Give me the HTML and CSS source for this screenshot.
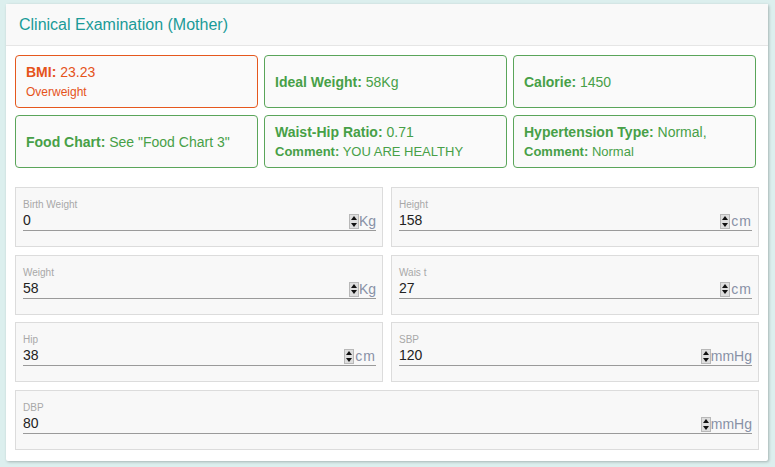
FILE: index.html
```html
<!DOCTYPE html>
<html>
<head>
<meta charset="utf-8">
<link rel="stylesheet" href="styles.css">
</head>
<body>
<div class="card">
  <div class="card-header">Clinical Examination (Mother)</div>
  <div class="card-body">
    <div class="info-grid">
      <div class="info warn">
        <div class="line"><b>BMI:</b> 23.23</div>
        <div class="line small12">Overweight</div>
      </div>
      <div class="info ok">
        <div class="line"><b>Ideal Weight:</b> 58Kg</div>
      </div>
      <div class="info ok">
        <div class="line"><b>Calorie:</b> 1450</div>
      </div>
      <div class="info ok">
        <div class="line"><b>Food Chart:</b> See "Food Chart 3"</div>
      </div>
      <div class="info ok">
        <div class="line"><b>Waist-Hip Ratio:</b> 0.71</div>
        <div class="line small13"><b>Comment:</b> YOU ARE HEALTHY</div>
      </div>
      <div class="info ok">
        <div class="line"><b>Hypertension Type:</b> Normal,</div>
        <div class="line small13"><b>Comment:</b> Normal</div>
      </div>
    </div>

    <div class="field-grid">
      <div class="field">
        <div class="label">Birth Weight</div>
        <div class="input-row"><span class="value">0</span><span class="spin"><i class="up"></i><i class="down"></i></span><span class="unit">Kg</span></div>
      </div>
      <div class="field">
        <div class="label">Height</div>
        <div class="input-row"><span class="value">158</span><span class="spin"><i class="up"></i><i class="down"></i></span><span class="unit cm">cm</span></div>
      </div>
      <div class="field">
        <div class="label">Weight</div>
        <div class="input-row"><span class="value">58</span><span class="spin"><i class="up"></i><i class="down"></i></span><span class="unit">Kg</span></div>
      </div>
      <div class="field">
        <div class="label">Wais t</div>
        <div class="input-row"><span class="value">27</span><span class="spin"><i class="up"></i><i class="down"></i></span><span class="unit cm">cm</span></div>
      </div>
      <div class="field">
        <div class="label">Hip</div>
        <div class="input-row"><span class="value">38</span><span class="spin"><i class="up"></i><i class="down"></i></span><span class="unit cm">cm</span></div>
      </div>
      <div class="field">
        <div class="label">SBP</div>
        <div class="input-row"><span class="value">120</span><span class="spin"><i class="up"></i><i class="down"></i></span><span class="unit">mmHg</span></div>
      </div>
      <div class="field wide">
        <div class="label">DBP</div>
        <div class="input-row"><span class="value">80</span><span class="spin"><i class="up"></i><i class="down"></i></span><span class="unit">mmHg</span></div>
      </div>
    </div>
  </div>
</div>
</body>
</html>
```

FILE: styles.css
```css
* { box-sizing: border-box; }
html, body { margin: 0; padding: 0; }
body {
  background: #dcefee;
  font-family: "Liberation Sans", Arial, sans-serif;
  width: 775px;
  height: 467px;
  overflow: hidden;
  padding: 4px 7px 0 6px;
}
.card {
  background: #fff;
  height: 457px;
  box-shadow: 1px 1px 3px rgba(0,0,0,0.25);
  border-radius: 2px;
}
.card-header {
  height: 42px;
  background: #f9f9f9;
  border-bottom: 1px solid #e6e6e6;
  color: #1a9b98;
  font-size: 16px;
  padding: 12px 0 0 13px;
}
.card-body {
  padding: 9px 9px 0 9px;
}
.info-grid {
  display: grid;
  grid-template-columns: 243px 243px 243px;
  column-gap: 6px;
  row-gap: 7px;
}
.info {
  height: 53px;
  border: 1px solid #5aa55a;
  border-radius: 4px;
  background: #fafafa;
  padding: 0 10px;
  display: flex;
  flex-direction: column;
  justify-content: center;
  color: #47a047;
  font-size: 14px;
}
.info.warn {
  border-color: #e5581e;
  color: #e5531a;
}
.info .line { line-height: 20px; white-space: nowrap; }
.info .small12 { font-size: 12px; }
.info .small13 { font-size: 13px; }
.field-grid {
  margin-top: 19px;
  display: grid;
  grid-template-columns: 368px 368px;
  column-gap: 8px;
  row-gap: 7.6px;
}
.field {
  height: 60px;
  background: #f8f8f8;
  border: 1px solid #dcdcdc;
  padding: 11px 6px 0 7px;
}
.field.wide { grid-column: 1 / span 2; }
.label {
  font-size: 10px;
  color: #a8a8a8;
  height: 12px;
  line-height: 12px;
}
.input-row {
  display: flex;
  align-items: center;
  height: 19px;
  border-bottom: 1px solid #9a9a9a;
  padding-bottom: 0;
  box-sizing: content-box;
}
.value {
  flex: 1;
  font-size: 14px;
  color: #222;
  line-height: 19px;
}
.spin {
  width: 10px;
  height: 15px;
  background: #dedede;
  border: 1px solid #b8b8b8;
  display: flex;
  flex-direction: column;
  align-items: center;
  justify-content: space-around;
  margin-top: 2px;
}
.spin i {
  width: 0; height: 0;
  border-left: 3px solid transparent;
  border-right: 3px solid transparent;
}
.spin .up { border-bottom: 4px solid #111; }
.spin .down { border-top: 4px solid #111; }
.unit {
  font-size: 14px;
  color: #8891a6;
  line-height: 19px;
  margin-top: 2px;
}
.unit.cm { letter-spacing: 1px; margin-left: 1px; }
```
